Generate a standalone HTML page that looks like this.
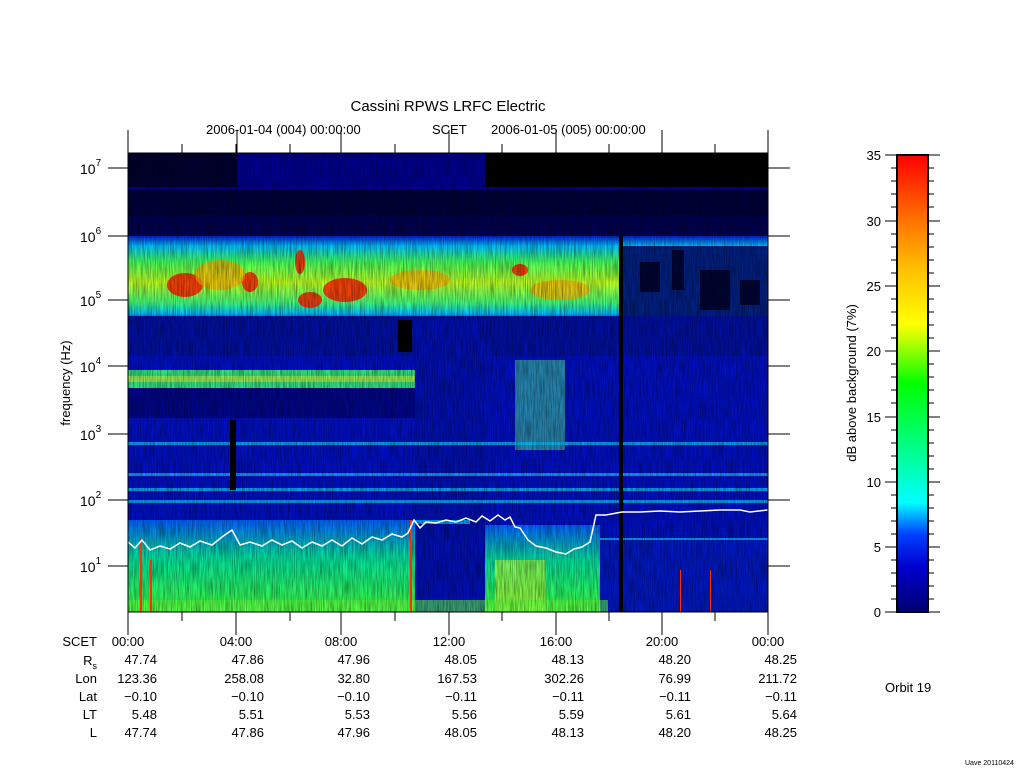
<!DOCTYPE html>
<html><head><meta charset="utf-8"><style>
html,body{margin:0;padding:0;background:#fff;}
svg{display:block;font-family:"Liberation Sans",sans-serif;}
</style></head><body>
<svg width="1024" height="768" viewBox="0 0 1024 768" xmlns="http://www.w3.org/2000/svg">
<defs>
<linearGradient id="cb" x1="0" y1="1" x2="0" y2="0">
<stop offset="0" stop-color="#000070"/>
<stop offset="0.1" stop-color="#0000d0"/>
<stop offset="0.17" stop-color="#0040ff"/>
<stop offset="0.24" stop-color="#00ffff"/>
<stop offset="0.35" stop-color="#00ff90"/>
<stop offset="0.5" stop-color="#00ff00"/>
<stop offset="0.6" stop-color="#c8ff00"/>
<stop offset="0.63" stop-color="#ffff00"/>
<stop offset="0.75" stop-color="#ffc000"/>
<stop offset="0.86" stop-color="#ff7000"/>
<stop offset="1" stop-color="#ff0000"/>
</linearGradient>
<linearGradient id="hf" x1="0" y1="0" x2="0" y2="1">
<stop offset="0" stop-color="#0020d0"/>
<stop offset="0.12" stop-color="#00c0ff"/>
<stop offset="0.3" stop-color="#40ff60"/>
<stop offset="0.55" stop-color="#c0ff20"/>
<stop offset="0.8" stop-color="#40ff80"/>
<stop offset="0.92" stop-color="#00c0ff"/>
<stop offset="1" stop-color="#0030e0"/>
</linearGradient>
<linearGradient id="lo" x1="0" y1="0" x2="0" y2="1">
<stop offset="0" stop-color="#0060ff"/>
<stop offset="0.4" stop-color="#00e0a0"/>
<stop offset="1" stop-color="#40ff40"/>
</linearGradient>
<filter id="nz" x="0" y="0" width="1" height="1" filterUnits="objectBoundingBox"><feTurbulence type="fractalNoise" baseFrequency="0.9 0.05" numOctaves="2" seed="3"/><feColorMatrix values="0 0 0 0 0  0 0 0 0 0  0 0 0 0 0  0 0 0 -1.6 1.1"/></filter>
</defs>
<text x="448" y="111" font-size="15" text-anchor="middle">Cassini RPWS LRFC Electric</text>
<text x="206" y="134" font-size="13">2006-01-04 (004) 00:00:00</text>
<text x="432" y="134" font-size="13">SCET</text>
<text x="491" y="134" font-size="13">2006-01-05 (005) 00:00:00</text>
<svg x="128" y="153" width="640" height="459" viewBox="128 153 640 459" overflow="hidden">
<rect x="128" y="153" width="640" height="459" fill="#0010c0"/>
<rect x="128" y="153" width="640" height="83" fill="#00003a"/>
<rect x="237" y="153" width="248" height="35" fill="#000090"/>
<rect x="128" y="153" width="109" height="35" fill="#000030"/>
<rect x="485" y="153" width="283" height="35" fill="#000000"/>
<rect x="128" y="187" width="640" height="2" fill="#0000a0"/>
<rect x="128" y="215" width="640" height="21" fill="#000050"/>
<rect x="128" y="236" width="640" height="84" fill="url(#hf)"/>
<rect x="620" y="246" width="148" height="74" fill="#002080"/>
<g fill="#ff2000" opacity="0.85">
<ellipse cx="185" cy="285" rx="18" ry="12"/><ellipse cx="345" cy="290" rx="22" ry="12"/>
<ellipse cx="310" cy="300" rx="12" ry="8"/><ellipse cx="250" cy="282" rx="8" ry="10"/>
<ellipse cx="520" cy="270" rx="8" ry="6"/><ellipse cx="300" cy="262" rx="5" ry="12"/>
</g>
<g fill="#ffb000" opacity="0.7">
<ellipse cx="220" cy="275" rx="25" ry="15"/><ellipse cx="420" cy="280" rx="30" ry="10"/><ellipse cx="560" cy="290" rx="30" ry="10"/>
</g>
<g fill="#000020" opacity="0.8">
<rect x="640" y="262" width="20" height="30"/><rect x="700" y="270" width="30" height="40"/><rect x="740" y="280" width="20" height="25"/><rect x="672" y="250" width="12" height="40"/>
</g>
<rect x="128" y="316" width="640" height="40" fill="#0010a0"/>
<rect x="415" y="320" width="70" height="275" fill="#0010b0"/>
<rect x="128" y="370" width="287" height="18" fill="#30e080"/>
<rect x="128" y="376" width="287" height="6" fill="#c0f040" opacity="0.7"/>
<rect x="515" y="360" width="50" height="90" fill="#40d0a0" opacity="0.6"/>
<rect x="128" y="388" width="287" height="30" fill="#000060" opacity="0.6"/>
<g fill="#00c0ff" opacity="0.8">
<rect x="128" y="442" width="640" height="3"/><rect x="128" y="473" width="640" height="3"/>
<rect x="128" y="488" width="640" height="3"/><rect x="128" y="500" width="640" height="3"/>
<rect x="200" y="520" width="270" height="4"/><rect x="485" y="538" width="283" height="4"/>
</g>
<rect x="128" y="520" width="287" height="92" fill="url(#lo)"/>
<rect x="485" y="525" width="115" height="87" fill="url(#lo)"/>
<rect x="495" y="560" width="50" height="52" fill="#c0ff30" opacity="0.6"/>
<rect x="600" y="540" width="168" height="72" fill="#0018c0"/>
<rect x="128" y="600" width="480" height="12" fill="#60ff40" opacity="0.6"/>
<rect x="128" y="153" width="640" height="459" filter="url(#nz)" opacity="0.5"/>
<rect x="619" y="236" width="4" height="376" fill="#000"/>
<rect x="230" y="420" width="6" height="70" fill="#000"/>
<rect x="398" y="320" width="14" height="32" fill="#000"/>
<g fill="#ff3000"><rect x="140" y="540" width="2" height="72"/><rect x="150" y="560" width="2" height="52"/><rect x="410" y="520" width="2" height="92"/><rect x="680" y="570" width="1" height="42"/><rect x="710" y="570" width="1" height="42"/></g>
<polyline fill="none" stroke="#fff" stroke-width="1.5" points="128,542 135,548 142,540 150,550 160,546 170,549 180,543 190,547 200,541 212,545 222,537 232,530 240,545 250,542 262,546 272,540 282,545 292,541 302,548 312,542 322,546 332,540 342,546 352,538 362,544 372,537 382,540 392,534 402,537 408,533 414,520 420,528 426,522 436,523 446,520 456,522 466,518 476,522 482,516 490,521 498,515 505,520 510,517 515,527 520,528 528,540 536,546 546,548 556,552 566,554 574,549 582,547 590,542 596,515 606,515 622,512 640,512 660,511 680,512 700,511 720,510 740,510 750,512 768,510"/>
</svg>
<rect x="128" y="153" width="640" height="459" fill="none" stroke="#000" stroke-width="1"/>
<g stroke="#000" stroke-width="1">
<path d="M128 130V153 M182 144V153 M236 144V153 M290 144V153 M341 144V153 M395 144V153 M449 144V153 M502 144V153 M556 144V153 M609 144V153 M662 144V153 M715 144V153 M768 130V153 M237 130V153 M341 130V153 M449 130V153 M556 130V153 M662 130V153"/>
<path d="M128 612V635 M182 612V621 M236 612V635 M290 612V621 M341 612V635 M395 612V621 M449 612V635 M502 612V621 M556 612V635 M609 612V621 M662 612V635 M715 612V621 M768 612V635"/>
<path d="M108 168H128 M108 236H128 M108 300H128 M108 366H128 M108 434H128 M108 500H128 M108 566H128 M768 168H790 M768 236H790 M768 300H790 M768 366H790 M768 434H790 M768 500H790 M768 566H790"/>
</g>
<g font-size="14">
<text x="80" y="174">10<tspan font-size="10" dy="-8">7</tspan></text>
<text x="80" y="242">10<tspan font-size="10" dy="-8">6</tspan></text>
<text x="80" y="306">10<tspan font-size="10" dy="-8">5</tspan></text>
<text x="80" y="372">10<tspan font-size="10" dy="-8">4</tspan></text>
<text x="80" y="440">10<tspan font-size="10" dy="-8">3</tspan></text>
<text x="80" y="506">10<tspan font-size="10" dy="-8">2</tspan></text>
<text x="80" y="572">10<tspan font-size="10" dy="-8">1</tspan></text>
</g>
<text transform="translate(70,383) rotate(-90)" font-size="13" text-anchor="middle">frequency (Hz)</text>
<rect x="897" y="155" width="31" height="457" fill="url(#cb)" stroke="#000" stroke-width="2"/>
<g stroke="#000" stroke-width="1">
<path d="M885 155H897 M885 221H897 M885 286H897 M885 351H897 M885 417H897 M885 482H897 M885 547H897 M885 612H897 M928 155H940 M928 221H940 M928 286H940 M928 351H940 M928 417H940 M928 482H940 M928 547H940 M928 612H940"/>
<path d="M891 168H897 M891 181H897 M891 194H897 M891 207H897 M891 234H897 M891 247H897 M891 260H897 M891 273H897 M891 299H897 M891 312H897 M891 325H897 M891 338H897 M891 364H897 M891 377H897 M891 390H897 M891 403H897 M891 430H897 M891 443H897 M891 456H897 M891 469H897 M891 495H897 M891 508H897 M891 521H897 M891 534H897 M891 560H897 M891 573H897 M891 586H897 M891 599H897 M928 168H934 M928 181H934 M928 194H934 M928 207H934 M928 234H934 M928 247H934 M928 260H934 M928 273H934 M928 299H934 M928 312H934 M928 325H934 M928 338H934 M928 364H934 M928 377H934 M928 390H934 M928 403H934 M928 430H934 M928 443H934 M928 456H934 M928 469H934 M928 495H934 M928 508H934 M928 521H934 M928 534H934 M928 560H934 M928 573H934 M928 586H934 M928 599H934"/>
</g>
<g font-size="13" text-anchor="end">
<text x="881" y="160">35</text><text x="881" y="226">30</text><text x="881" y="291">25</text><text x="881" y="356">20</text><text x="881" y="422">15</text><text x="881" y="487">10</text><text x="881" y="552">5</text><text x="881" y="617">0</text>
</g>
<text transform="translate(856,383) rotate(-90)" font-size="13" text-anchor="middle">dB above background (7%)</text>
<text x="885" y="692" font-size="13">Orbit 19</text>
<text x="965" y="765" font-size="7">Uave 20110424</text>
<g font-size="13">
<g text-anchor="end">
<text x="97" y="646">SCET</text><text x="97" y="665">R<tspan font-size="9" dy="4">s</tspan></text><text x="97" y="683">Lon</text><text x="97" y="701">Lat</text><text x="97" y="719">LT</text><text x="97" y="737">L</text>
</g>
<g text-anchor="middle">
<text x="128" y="646">00:00</text><text x="236" y="646">04:00</text><text x="341" y="646">08:00</text><text x="449" y="646">12:00</text><text x="556" y="646">16:00</text><text x="662" y="646">20:00</text><text x="768" y="646">00:00</text>
</g>
<g text-anchor="end">
<text x="157" y="664">47.74</text><text x="264" y="664">47.86</text><text x="370" y="664">47.96</text><text x="477" y="664">48.05</text><text x="584" y="664">48.13</text><text x="691" y="664">48.20</text><text x="797" y="664">48.25</text>
<text x="157" y="683">123.36</text><text x="264" y="683">258.08</text><text x="370" y="683">32.80</text><text x="477" y="683">167.53</text><text x="584" y="683">302.26</text><text x="691" y="683">76.99</text><text x="797" y="683">211.72</text>
<text x="157" y="701">−0.10</text><text x="264" y="701">−0.10</text><text x="370" y="701">−0.10</text><text x="477" y="701">−0.11</text><text x="584" y="701">−0.11</text><text x="691" y="701">−0.11</text><text x="797" y="701">−0.11</text>
<text x="157" y="719">5.48</text><text x="264" y="719">5.51</text><text x="370" y="719">5.53</text><text x="477" y="719">5.56</text><text x="584" y="719">5.59</text><text x="691" y="719">5.61</text><text x="797" y="719">5.64</text>
<text x="157" y="737">47.74</text><text x="264" y="737">47.86</text><text x="370" y="737">47.96</text><text x="477" y="737">48.05</text><text x="584" y="737">48.13</text><text x="691" y="737">48.20</text><text x="797" y="737">48.25</text>
</g>
</g>
</svg>
</body></html>
